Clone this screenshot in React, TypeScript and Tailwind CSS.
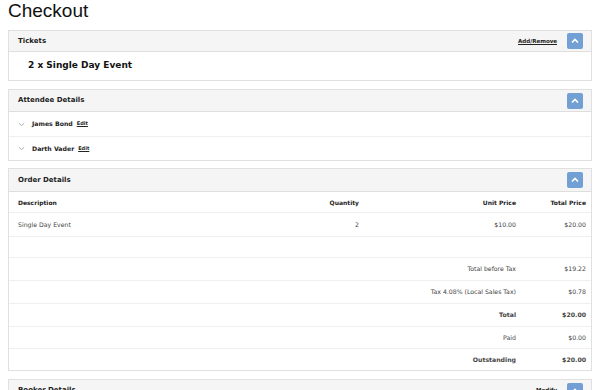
import React from "react";

const V = { fontFamily: '"DejaVu Sans", Verdana, sans-serif' };

function UpBtn() {
  return (
    <div className="w-[16px] h-[16px] rounded-[2px] bg-[#72a0d4] flex items-center justify-center">
      <svg width="8" height="6" viewBox="0 0 8 6">
        <path d="M1 4.5 L4 1.5 L7 4.5" stroke="white" strokeWidth="1.6" fill="none" />
      </svg>
    </div>
  );
}

function Header({ title, right, h }: { title: string; right?: string; h: string }) {
  return (
    <div className={h + " bg-[#f5f5f5] border-b border-[#dedede] flex items-center justify-between pl-[9px] pr-[8px]"}>
      <span className="text-[7px] font-bold text-[#222]">{title}</span>
      <div className="flex items-center gap-[10px]">
        {right && <span className="text-[5.5px] font-bold underline text-[#222]">{right}</span>}
        <UpBtn />
      </div>
    </div>
  );
}

function Chev() {
  return (
    <svg width="7" height="5" viewBox="0 0 7 5" className="mr-[7px]">
      <path d="M0.8 1 L3.5 3.6 L6.2 1" stroke="#9a9a9a" strokeWidth="0.8" fill="none" />
    </svg>
  );
}

export default function App() {
  const row = "flex items-center border-t border-[#efefef] text-[6.2px] text-[#444]";
  return (
    <div className="w-[600px] h-[390px] overflow-hidden bg-white" style={V}>
      <div className="px-[8px]">
        <h1
          className="text-[19px] leading-[20px] text-[#111] pt-[1px]"
          style={{ fontFamily: '"Liberation Sans", Arial, sans-serif' }}
        >
          Checkout
        </h1>

        <div className="mt-[9px] border border-[#e0e0e0]">
          <Header title="Tickets" right="Add/Remove" h="h-[21px]" />
          <div className="h-[28px] flex items-center pl-[19px] text-[9px] font-bold text-[#111]">
            2 x Single Day Event
          </div>
        </div>

        <div className="mt-[8px] border border-[#e0e0e0]">
          <Header title="Attendee Details" h="h-[22px]" />
          <div className="h-[24px] flex items-center pl-[9px] text-[6.2px] font-bold text-[#222]">
            <Chev />
            <span>James Bond</span>
            <span className="ml-[4px] text-[5px] underline">Edit</span>
          </div>
          <div className="h-[24px] flex items-center pl-[9px] text-[6.2px] font-bold text-[#222] border-t border-[#efefef]">
            <Chev />
            <span>Darth Vader</span>
            <span className="ml-[4px] text-[5px] underline">Edit</span>
          </div>
        </div>

        <div className="mt-[7px] border border-[#e0e0e0]">
          <Header title="Order Details" h="h-[23px]" />
          <div className="flex h-[20px] items-center text-[6px] font-bold text-[#222]">
            <div className="w-[190px] pl-[9px]">Description</div>
            <div className="w-[166px] text-right pr-[6px]">Quantity</div>
            <div className="w-[157px] text-right pr-[6px]">Unit Price</div>
            <div className="flex-1 text-right pr-[5px]">Total Price</div>
          </div>
          <div className={row + " h-[24px]"}>
            <div className="w-[190px] pl-[9px]">Single Day Event</div>
            <div className="w-[166px] text-right pr-[6px]">2</div>
            <div className="w-[157px] text-right pr-[6px]">$10.00</div>
            <div className="flex-1 text-right pr-[5px]">$20.00</div>
          </div>
          <div className={row + " h-[21px]"} />
          {[
            ["Total before Tax", "$19.22", false, "h-[23px]"],
            ["Tax 4.08% (Local Sales Tax)", "$0.78", false, "h-[23px]"],
            ["Total", "$20.00", true, "h-[23px]"],
            ["Paid", "$0.00", false, "h-[22px]"],
            ["Outstanding", "$20.00", true, "h-[22px]"],
          ].map(([l, v, b, h], i) => (
            <div key={i} className={row + " " + (h as string) + (b ? " font-bold text-[#222]" : "")}>
              <div className="w-[513px] text-right pr-[6px]">{l as string}</div>
              <div className="flex-1 text-right pr-[5px]">{v as string}</div>
            </div>
          ))}
        </div>

        <div className="mt-[8px] border border-[#e0e0e0]">
          <Header title="Booker Details" right="Modify" h="h-[22px]" />
        </div>
      </div>
    </div>
  );
}
